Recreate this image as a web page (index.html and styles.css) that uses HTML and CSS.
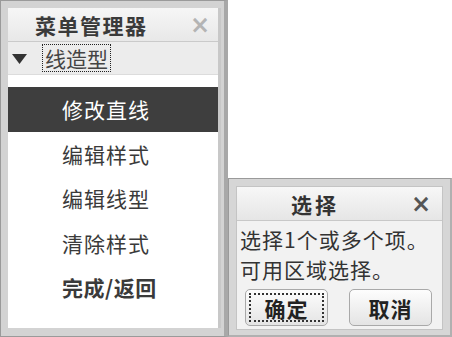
FILE: index.html
```html
<!DOCTYPE html>
<html lang="zh">
<head>
<meta charset="utf-8">
<link rel="stylesheet" href="styles.css">
</head>
<body>
<div class="stage">
  <div class="panel">
    <div class="inner">
      <div class="head">
        <span class="head-title">菜单管理器</span>
        <span class="close light">×</span>
      </div>
      <div class="crumb">
        <svg class="tri" width="15" height="10" viewBox="0 0 15 10"><path d="M0 0H15L7.5 10Z" fill="#333"/></svg>
        <span class="focus">线造型</span>
      </div>
      <div class="gap"></div>
      <ul class="menu">
        <li class="item sel">修改直线</li>
        <li class="item">编辑样式</li>
        <li class="item">编辑线型</li>
        <li class="item">清除样式</li>
        <li class="item bold">完成/返回</li>
      </ul>
    </div>
  </div>
  <div class="dialog">
    <div class="dinner">
      <div class="dhead">
        <span class="dtitle">选择</span>
        <span class="close dark">×</span>
      </div>
      <div class="dbody">
        <p class="line">选择1个或多个项。</p>
        <p class="line">可用区域选择。</p>
        <div class="btns">
          <button class="btn"><span class="bfocus">确定</span></button>
          <button class="btn"><span class="blabel">取消</span></button>
        </div>
      </div>
    </div>
  </div>
</div>
</body>
</html>
```

FILE: styles.css
```css
* { box-sizing: border-box; margin: 0; padding: 0; }
html, body { background: #ffffff; }
body {
  width: 452px;
  height: 337px;
  overflow: hidden;
  font-family: "Noto Sans CJK SC", "Noto Sans", sans-serif;
  color: #333;
}
.stage {
  display: flex;
  align-items: flex-end;
  height: 337px;
}
.panel {
  width: 228px;
  height: 337px;
  background: #d3d3d3;
  border: 1px solid #9a9a9a;
  border-right: 4px solid #a8a8a8;
  padding: 7px 3px 8px 7px;
  display: flex;
}
.inner {
  flex: 1;
  display: flex;
  flex-direction: column;
  background: #fff;
  border-right: 3px solid #c8c8c8;
}
.head {
  height: 34px;
  display: flex;
  align-items: center;
  background: linear-gradient(#f6f6f6, #e8e8e8);
  border-bottom: 1px solid #cacaca;
  padding-left: 27px;
  padding-right: 8px;
}
.head-title {
  flex: 1;
  font-size: 21px;
  font-weight: bold;
  letter-spacing: 1.5px;
  color: #3a3a3a;
}
.close {
  font-family: "DejaVu Sans", sans-serif;
  font-size: 24px;
  font-weight: bold;
  line-height: 1;
}
.close.light { color: #b4b4b4; }
.close.dark { color: #555; margin-left: 18px; }
.crumb {
  height: 32px;
  display: flex;
  align-items: center;
  background: #ececec;
  padding-left: 4px;
  gap: 15px;
}
.tri { margin-top: 1px; }
.focus {
  font-size: 21px;
  line-height: 26px;
  padding: 0 2px;
  border: 1px dotted #222;
  color: #444;
}
.gap {
  height: 13px;
  background: #fff;
  border-top: 1px solid #dcdcdc;
}
.menu {
  list-style: none;
  flex: 1;
  background: #fff;
}
.item {
  height: 44.5px;
  display: flex;
  align-items: center;
  padding-left: 54px;
  font-size: 21px;
  letter-spacing: 1px;
  color: #3a3a3a;
}
.item.sel {
  background: #3e3e3e;
  color: #fff;
}
.item.bold { font-weight: bold; letter-spacing: 0.5px; }
.dialog {
  width: 224px;
  height: 159px;
  background: #d6d6d6;
  border: 1px solid #9a9a9a;
  border-right: 2px solid #b0b0b0;
  border-bottom: 2px solid #b0b0b0;
  padding: 7px 7px 5px 7px;
  display: flex;
}
.dinner {
  flex: 1;
  display: flex;
  flex-direction: column;
  background: #f2f2f2;
  border: 1px solid #c4c4c4;
}
.dhead {
  height: 34px;
  display: flex;
  align-items: center;
  background: linear-gradient(#f7f7f7, #e6e6e6);
  border-bottom: 1px solid #c8c8c8;
  padding-left: 0;
  padding-right: 11px;
}
.dtitle {
  flex: 1;
  text-align: center;
  font-size: 21px;
  font-weight: bold;
  letter-spacing: 3px;
  color: #333;
}
.dbody {
  flex: 1;
  padding: 3px 0 0 3px;
  display: flex;
  flex-direction: column;
}
.line {
  font-size: 21px;
  line-height: 30px;
  letter-spacing: 1px;
  color: #333;
}
.btns {
  display: flex;
  gap: 21px;
  margin-top: 5px;
  padding-left: 5px;
}
.btn {
  width: 83px;
  height: 37px;
  border: 1px solid #a9a9a9;
  border-radius: 5px;
  background: linear-gradient(#fdfdfd, #e4e4e4);
  font-family: inherit;
  font-size: 21px;
  font-weight: bold;
  color: #222;
  display: flex;
  align-items: center;
  justify-content: center;
  padding: 3px;
}
.bfocus {
  flex: 1;
  align-self: stretch;
  display: flex;
  align-items: center;
  justify-content: center;
  border: 2px dotted #333;
  letter-spacing: 1px;
}
.blabel { letter-spacing: 1px; }
```
